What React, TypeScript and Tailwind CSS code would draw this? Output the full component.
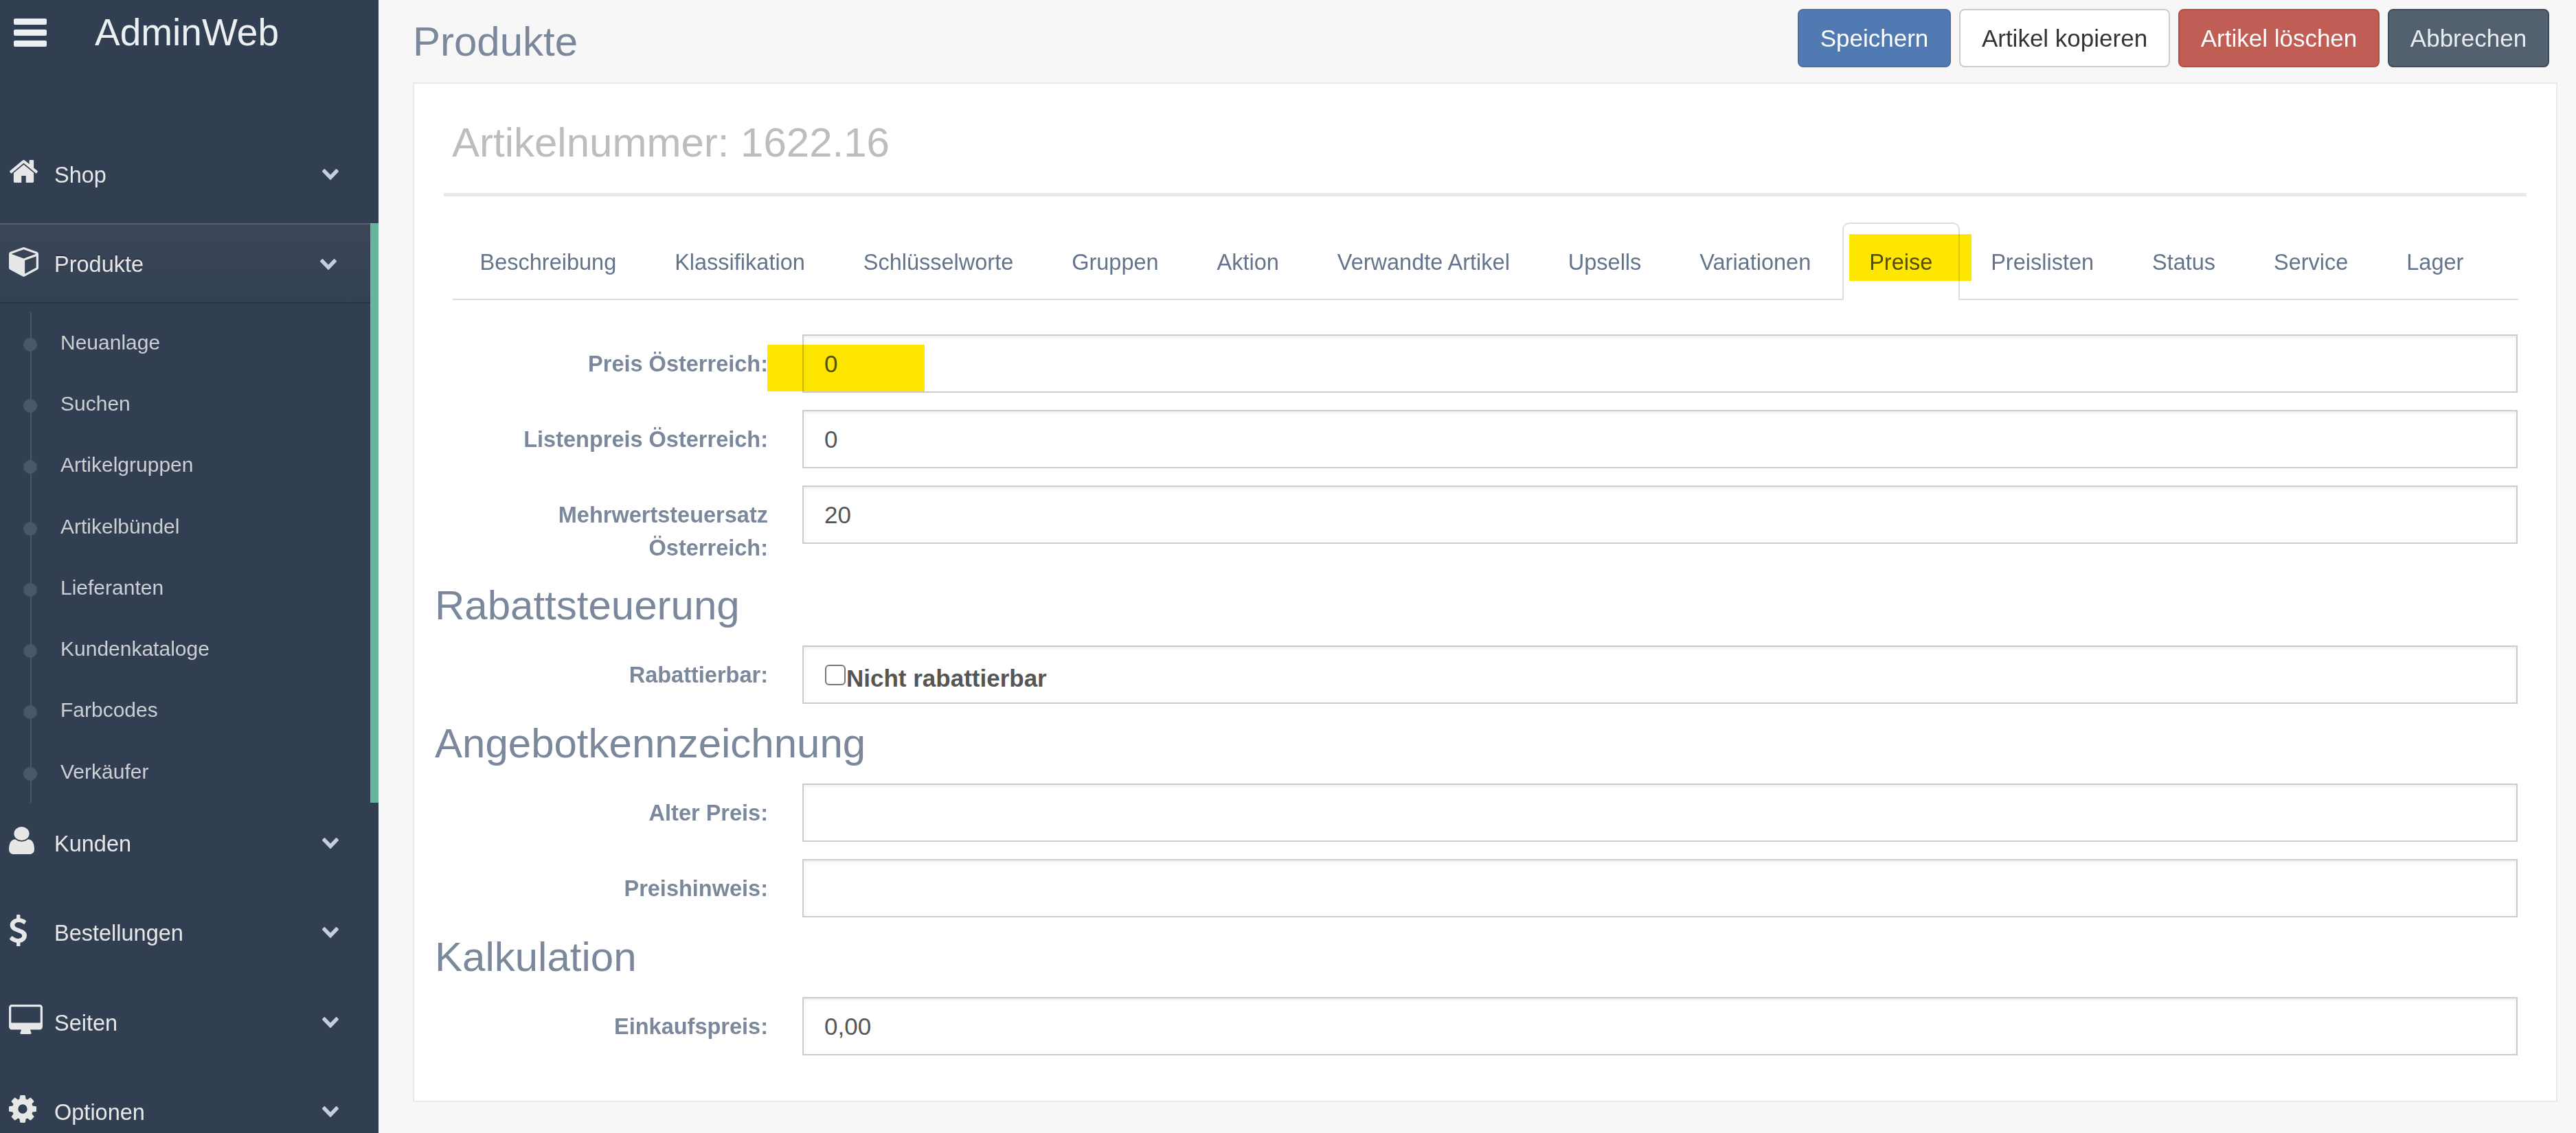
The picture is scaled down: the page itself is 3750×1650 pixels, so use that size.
import React from "react";

type IconName = "home" | "cube" | "user" | "dollar" | "desktop" | "cog";

const icons: Record<IconName, { viewBox: string; d: string }> = {
  home: {
    viewBox: "89 253 1614 1283",
    d: "M1472 992v480q0 26-19 45t-45 19h-384v-384h-256v384h-384q-26 0-45-19t-19-45v-480q0-1 .5-3t.5-3l575-474 575 474q1 2 1 6zm223-69l-62 74q-8 9-21 11h-3q-13 0-21-7l-692-577-692 577q-12 8-24 7-13-2-21-11l-62-74q-8-10-7-23.5t11-21.5l719-599q32-26 76-26t76 26l244 204v-195q0-14 9-23t23-9h192q14 0 23 9t9 23v408l219 182q10 8 11 21.5t-7 23.5z",
  },
  cube: {
    viewBox: "0 128 1664 1664",
    d: "M896 1629l640-349v-636l-640 233v752zm-64-865l698-254-698-254-698 254zm832-252v768q0 35-18 65t-49 47l-704 384q-28 16-61 16t-61-16l-704-384q-31-17-49-47t-18-65v-768q0-40 23-73t61-47l704-256q22-8 44-8t44 8l704 256q38 14 61 47t23 73z",
  },
  user: {
    viewBox: "256 128 1280 1536",
    d: "M1536 1399q0 109-62.5 187t-150.5 78h-854q-88 0-150.5-78t-62.5-187q0-85 8.5-160.5t31.5-152 58.5-131 94-89 134.5-34.5q131 128 313 128t313-128q76 0 134.5 34.5t94 89 58.5 131 31.5 152 8.5 160.5zm-256-887q0 159-112.5 271.5t-271.5 112.5-271.5-112.5-112.5-271.5 112.5-271.5 271.5-112.5 271.5 112.5 112.5 271.5z",
  },
  dollar: {
    viewBox: "430 0 932 1792",
    d: "M1362 1185q0 153-99.5 263.5t-258.5 136.5v175q0 14-9 23t-23 9h-135q-13 0-22.5-9.5t-9.5-22.5v-175q-66-9-127.5-31t-101.5-44.5-74-48-46.5-37.5-17.5-18q-17-21-2-41l103-135q7-10 23-12 15-2 24 9l2 2q113 99 243 125 37 8 74 8 81 0 142.5-43t61.5-122q0-28-15-53t-33.5-42-58.5-37.5-66-32-80-32.5q-39-16-61.5-25t-61.5-26.5-62.5-31-56.5-35.5-53.5-42.5-43.5-49-35.5-58-21-66.5-8.5-78q0-138 98-242t255-134v-180q0-13 9.5-22.5t22.5-9.5h135q14 0 23 9t9 23v176q57 6 110.5 23t87 33.5 63.5 37.5 39 29 15 14q17 18 5 38l-81 146q-8 15-23 16-14 3-27-7-3-3-14.5-12t-39-26.5-58.5-32-74.5-26-85.5-11.5q-95 0-155 43t-60 111q0 26 8.5 48t29.5 41.5 39.5 33 56 31 60.5 27 70 27.5q53 20 81 31.5t76 35 75.5 42.5 62 50 53 63.5 31.5 76.5 13 94z",
  },
  desktop: {
    viewBox: "-64 0 1920 1664",
    d: "M1728 992v-832q0-13-9.5-22.5t-22.5-9.5h-1600q-13 0-22.5 9.5t-9.5 22.5v832q0 13 9.5 22.5t22.5 9.5h1600q13 0 22.5-9.5t9.5-22.5zm128-832v1088q0 66-47 113t-113 47h-544q0 37 16 77.5t32 71 16 43.5q0 26-19 45t-45 19h-512q-26 0-45-19t-19-45q0-14 16-44t32-70 16-78h-544q-66 0-113-47t-47-113v-1088q0-66 47-113t113-47h1600q66 0 113 47t47 113z",
  },
  cog: {
    viewBox: "128 128 1536 1536",
    d: "M1152 896q0-106-75-181t-181-75-181 75-75 181 75 181 181 75 181-75 75-181zm512-109v222q0 12-8 23t-20 13l-185 28q-19 54-39 91 35 50 107 138 10 12 10 25t-9 23q-27 37-99 108t-94 71q-12 0-26-9l-138-108q-44 23-91 38-16 136-29 186-7 28-36 28h-222q-14 0-24.5-8.5t-11.5-21.5l-28-184q-49-16-90-37l-141 107q-10 9-25 9-14 0-25-11-126-114-165-168-7-10-7-23 0-12 8-23 15-21 51-66.5t54-70.5q-27-50-41-99l-183-27q-13-2-21-12.5t-8-23.5v-222q0-12 8-23t19-13l186-28q14-46 39-92-40-57-107-138-10-12-10-24 0-10 9-23 26-36 98.5-107.5t94.5-71.5q13 0 26 10l138 107q44-23 91-38 16-136 29-186 7-28 36-28h222q14 0 24.5 8.5t11.5 21.5l28 184q49 16 90 37l142-107q9-9 24-9 13 0 25 10 129 119 165 170 7 8 7 22 0 12-8 23-15 21-51 66.5t-54 70.5q26 50 41 98l183 28q13 2 21 12.5t8 23.5z",
  },
};

const MenuIcon: React.FC<{ name: IconName; className: string }> = ({
  name,
  className,
}) => (
  <svg
    viewBox={icons[name].viewBox}
    preserveAspectRatio="none"
    className={className}
    fill="currentColor"
  >
    <path fillRule="evenodd" d={icons[name].d} />
  </svg>
);

const ChevronDown: React.FC = () => (
  <svg
    viewBox="90 533 1612 1035"
    className="w-6 h-4 text-[#c4cfda]"
    fill="currentColor"
    preserveAspectRatio="none"
  >
    <path d="M1683 808l-742 741q-19 19-45 19t-45-19l-742-741q-19-19-19-45.5t19-45.5l166-165q19-19 45-19t45 19l531 531 531-531q19-19 45-19t45 19l166 165q19 19 19 45.5t-19 45.5z" />
  </svg>
);

type MenuItemProps = {
  icon: IconName;
  iconClass: string;
  label: string;
  active?: boolean;
};

const MenuItem: React.FC<MenuItemProps> = ({
  icon,
  iconClass,
  label,
  active,
}) => (
  <div
    className={
      active
        ? "flex items-start h-[117px] pl-[13px] border-y-2 border-t-[#56616e] border-b-[#293242] bg-linear-to-b from-[#3b4656] to-[#334155] [text-shadow:0_-2px_0_rgba(0,0,0,0.25)]"
        : "flex items-start h-[130.3px] pl-[13px]"
    }
  >
    <div className="w-[66px] shrink-0">
      <MenuIcon name={icon} className={iconClass} />
    </div>
    <div
      className={
        active
          ? "flex-1 mt-[34px] text-[32.5px] leading-[48px]"
          : "flex-1 mt-[36px] text-[32.5px] leading-[48px]"
      }
    >
      {label}
    </div>
    <div className={active ? "mt-[50px] mr-[49px]" : "mt-[51px] mr-[58px]"}>
      <ChevronDown />
    </div>
  </div>
);

const subItems = [
  "Neuanlage",
  "Suchen",
  "Artikelgruppen",
  "Artikelbündel",
  "Lieferanten",
  "Kundenkataloge",
  "Farbcodes",
  "Verkäufer",
];

const Sidebar: React.FC = () => (
  <aside className="w-[551px] h-[1650px] shrink-0 overflow-hidden bg-[#323e51] text-[#e7e7e7]">
    <div className="flex items-start h-[194.7px] pl-5 text-[#ecf0f1]">
      <div className="flex flex-col gap-[7px] w-12 mt-[27px]">
        <div className="h-[9px] rounded-[2px] bg-[#ecf0f1]" />
        <div className="h-[9px] rounded-[2px] bg-[#ecf0f1]" />
        <div className="h-[9px] rounded-[2px] bg-[#ecf0f1]" />
      </div>
      <div className="ml-[70px] mt-[11px] text-[55px] leading-[72px]">
        AdminWeb
      </div>
    </div>

    <MenuItem icon="home" iconClass="w-[41px] h-[33px] ml-px mt-[38px]" label="Shop" />

    <div className="h-[844px] border-r-12 border-[#68b59d]">
      <MenuItem
        icon="cube"
        iconClass="w-[43px] h-[43px] mt-[33px]"
        label="Produkte"
        active
      />
      {/* vertical tree line runs behind the bullets */}
      <ul className="relative h-[714px] mt-[13px] before:absolute before:left-[44px] before:top-0 before:h-full before:w-[2px] before:bg-[#4a5766]">
        {subItems.map((item) => (
          <li
            key={item}
            className="flex items-center h-[89.3px] pl-[34px] text-[30px] text-[#cdcfd2]"
          >
            <span className="relative top-[2px] size-5 rounded-full bg-[#4a5766]" />
            <span className="ml-[34px] leading-[44px] mt-[-2px]">{item}</span>
          </li>
        ))}
      </ul>
    </div>

    <MenuItem icon="user" iconClass="w-[37px] h-[40px] mt-[35px]" label="Kunden" />
    <MenuItem icon="dollar" iconClass="w-[25px] h-[46px] ml-px mt-[33px]" label="Bestellungen" />
    <MenuItem icon="desktop" iconClass="w-[49px] h-[43px] mt-[33px]" label="Seiten" />
    <MenuItem icon="cog" iconClass="w-[40px] h-[40px] mt-[35px]" label="Optionen" />
  </aside>
);

const tabs = [
  "Beschreibung",
  "Klassifikation",
  "Schlüsselworte",
  "Gruppen",
  "Aktion",
  "Verwandte Artikel",
  "Upsells",
  "Variationen",
  "Preise",
  "Preislisten",
  "Status",
  "Service",
  "Lager",
];

const Tabs: React.FC<{ active: string }> = ({ active }) => (
  <ul className="flex h-[113px] mt-[38px] ml-[13px] mr-[12px] border-b-2 border-[#ddd] text-[32.5px] leading-[48px]">
    {tabs.map((tab) =>
      tab === active ? (
        <li
          key={tab}
          className="relative h-[113px] mr-[5.9px] px-[37.5px] pt-[32px] rounded-t-[10px] border-2 border-b-0 border-[#ddd] bg-white text-[#555]"
        >
          {tab}
          <span className="absolute left-[8px] top-[15px] w-[178px] h-[68px] bg-[#ffe600] mix-blend-multiply" />
        </li>
      ) : (
        <li
          key={tab}
          className="mr-[5.9px] px-[39.5px] pt-[34px] text-[#64748b]"
        >
          {tab}
        </li>
      ),
    )}
  </ul>
);

type FieldProps = {
  label: string;
  children?: React.ReactNode;
  tall?: boolean;
  marked?: boolean;
};

const Field: React.FC<FieldProps> = ({ label, children, tall, marked }) => (
  <div
    className={
      tall
        ? "flex items-start h-[117px] mb-[25px]"
        : "flex items-start h-[85px] mb-[25px]"
    }
  >
    <label className="w-[485px] pt-[19px] text-right text-[32.5px] leading-[48px] font-bold text-[#7b889c]">
      {label}
    </label>
    <div className="relative flex-1 h-[85px] ml-[50px] pl-[30px] pt-[16px] border-2 border-[#ccc] bg-white text-[35px] leading-[50px] text-[#555] shadow-[inset_0_2px_4px_rgba(0,0,0,0.08)]">
      {children}
      {marked && (
        <span className="absolute left-[-53px] top-[13px] w-[229px] h-[68px] bg-[#ffe600] mix-blend-multiply" />
      )}
    </div>
  </div>
);

const SectionTitle: React.FC<{ children: React.ReactNode }> = ({
  children,
}) => (
  <h2 className="mb-[25px] text-[60px] leading-[66px] text-[#7b889c]">
    {children}
  </h2>
);

const Header: React.FC = () => (
  <div className="flex justify-between items-start h-[120px] pr-[12px]">
    <h1 className="mt-[28px] text-[60px] leading-[66px] text-[#7b889c]">
      Produkte
    </h1>
    <div className="flex gap-3 mt-[13px] text-[35px] leading-[50px]">
      <button className="h-[85px] w-[223px] rounded-[8px] border-2 border-[#496fa3] bg-[#517ab2] text-white">
        Speichern
      </button>
      <button className="h-[85px] w-[307px] rounded-[8px] border-2 border-[#ccc] bg-white text-[#333]">
        Artikel kopieren
      </button>
      <button className="h-[85px] w-[293px] rounded-[8px] border-2 border-[#ba4b42] bg-[#c05d54] text-white">
        Artikel löschen
      </button>
      <button className="h-[85px] w-[235px] rounded-[8px] border-2 border-[#3e4b5d] bg-[#526070] text-[#e9edef]">
        Abbrechen
      </button>
    </div>
  </div>
);

const App: React.FC = () => (
  <div className="flex w-[3750px] h-[1650px] overflow-hidden bg-[#f7f7f7] font-['Liberation_Sans',Arial,sans-serif]">
    <Sidebar />
    <main className="flex-1 pl-[50px] pr-[27px]">
      <Header />
      <section className="h-[1485px] border-2 border-[#e6e9ed] bg-white">
        <div className="ml-[43px] mr-[43px]">
          <div className="h-[164px] pl-[12px] pt-[53px] border-b-5 border-[#e6e9ed] text-[60px] leading-[66px] text-[#bdbdbd]">
            Artikelnummer: 1622.16
          </div>
          <Tabs active="Preise" />
        </div>
        <form className="mt-[50px] ml-[30px] mr-[56px]">
          <Field label="Preis Österreich:" marked>
            0
          </Field>
          <Field label="Listenpreis Österreich:">0</Field>
          <Field label="Mehrwertsteuersatz Österreich:" tall>
            20
          </Field>
          <SectionTitle>Rabattsteuerung</SectionTitle>
          <Field label="Rabattierbar:">
            <div className="flex items-start font-bold">
              <span className="size-[30px] mt-[10px] ml-px mr-px rounded-[6px] border-2 border-[#767676] bg-white" />
              <span className="mt-[5px]">Nicht rabattierbar</span>
            </div>
          </Field>
          <SectionTitle>Angebotkennzeichnung</SectionTitle>
          <Field label="Alter Preis:" />
          <Field label="Preishinweis:" />
          <SectionTitle>Kalkulation</SectionTitle>
          <Field label="Einkaufspreis:">0,00</Field>
        </form>
      </section>
    </main>
  </div>
);

export default App;
